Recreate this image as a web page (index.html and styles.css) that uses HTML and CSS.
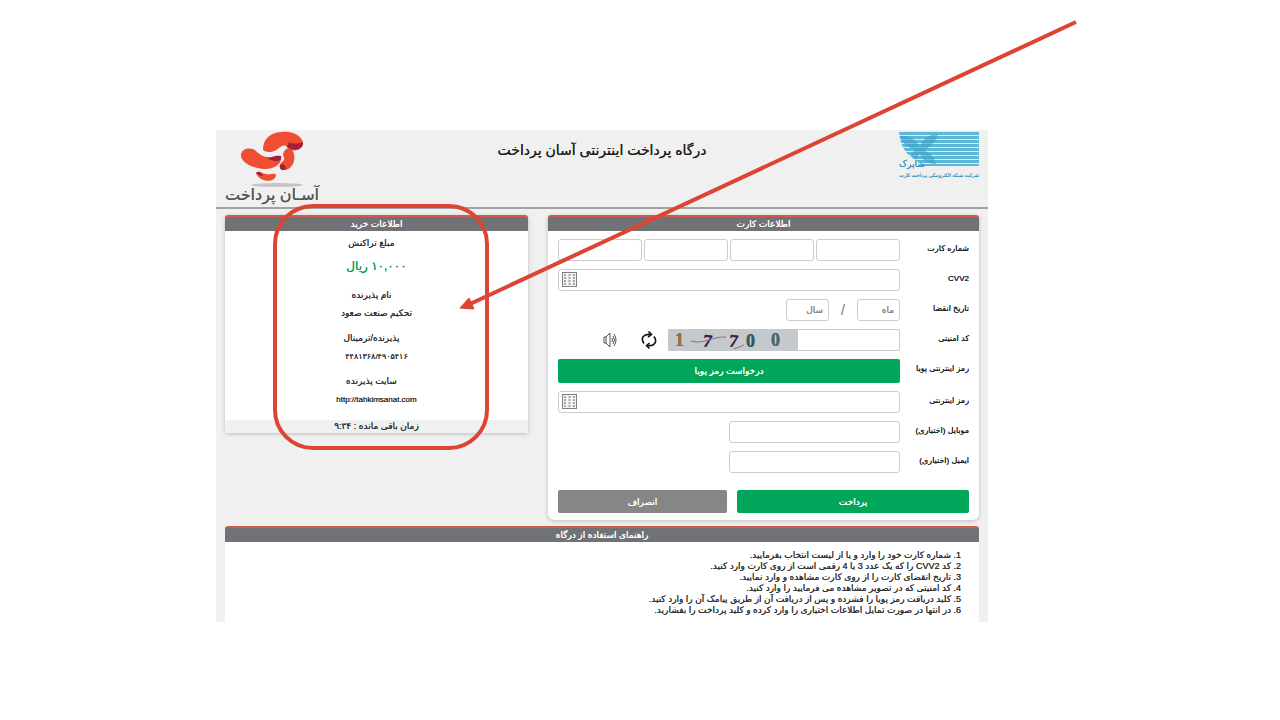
FILE: index.html
```html
<!DOCTYPE html>
<html lang="fa" dir="rtl">
<head>
<meta charset="utf-8">
<title>درگاه پرداخت اینترنتی آسان پرداخت</title>
<link rel="stylesheet" href="styles.css">
</head>
<body>
<div class="slide">
<div class="gateway">
  <header class="top">
    <div class="shaparak">
      <svg class="shaparak-mark" viewBox="0 0 80 36" aria-hidden="true">
        <defs>
          <pattern id="stripes" width="80" height="4" patternUnits="userSpaceOnUse"><rect y="1" width="80" height="3" fill="#5cb8d6"/></pattern>
          <clipPath id="mark"><path d="M0 0H80V35H22C19 29 14 27 11 25C4 19 1 12 0 0Z"/></clipPath>
        </defs>
        <g clip-path="url(#mark)">
          <rect width="80" height="36" fill="#d9f0f7"/>
          <rect width="80" height="36" fill="url(#stripes)"/>
          <path d="M1 5C11 4 18 9 21 17C23 8 30 3 39 3C37 11 31 17 24 19C31 21 36 27 37 33C27 33 22 28 21 21C19 27 17 30 13 32C9 26 13 20 18 18C9 18 3 12 1 5Z" fill="#3a9fc8" opacity=".6"/>
        </g>
      </svg>
      <span class="shaparak-name">شاپرک</span>
      <span class="shaparak-sub">شرکت شبکه الکترونیکی پرداخت کارت</span>
    </div>
    <h1>درگاه پرداخت اینترنتی آسان پرداخت</h1>
    <div class="asan">
      <svg class="asan-mark" viewBox="0 0 94 58" aria-hidden="true">
        <ellipse cx="52" cy="55" rx="26" ry="2" fill="#c4c4c4"/>
        <path d="M38 19C38 9 46 2 57 2C68 1 77 6 78 13C78 21 66 23 62 17C57 12 53 22 45 22C41 22 38 21 38 19Z" fill="#f04e32"/>
        <path d="M64 12C69 15 74 13 78 12C79 20 68 22 62 17Z" fill="#a71e3a"/>
        <path d="M16 24C18 18 26 17 31 21C39 29 47 28 56 26C58 34 48 40 38 39C27 38 15 32 16 24Z" fill="#f04e32"/>
        <path d="M42 28C47 28 49 25 56 26C57 32 51 33 42 28Z" fill="#a71e3a"/>
        <path d="M58 24C61 16 67 17 69 24C71 32 66 40 59 40C52 38 55 33 58 31C61 29 58 27 58 24Z" fill="#f04e32"/>
        <path d="M55 35C60 33 60 36 61 39C57 42 54 39 55 35Z" fill="#a71e3a"/>
        <path d="M31 43C34 40 36 43 41 44C46 45 50 42 51 45C50 54 34 52 31 43Z" fill="#f04e32"/>
        <path d="M31 43C34 40 37 43 38 46C35 46 33 45 31 43Z" fill="#a71e3a"/>
      </svg>
      <span class="asan-name">آسـان پرداخت</span>
    </div>
  </header>

  <main class="main">
    <section class="panel card">
      <h2>اطلاعات کارت</h2>
      <form class="form">
        <div class="row">
          <label for="c1">شماره کارت</label>
          <div class="quad">
            <input id="c1" type="text"><input type="text" aria-label="بخش دوم"><input type="text" aria-label="بخش سوم"><input type="text" aria-label="بخش چهارم">
          </div>
        </div>
        <div class="row">
          <label for="cvv">CVV2</label>
          <div class="pad">
            <input id="cvv" type="text">
            <svg class="keys" viewBox="0 0 15 15" aria-hidden="true"><rect x=".5" y=".5" width="14" height="14" fill="#f4f4f4" stroke="#808080"/><path d="M2 3H13M2 6H13M2 9H13M2 12H13" stroke="#8a8a8a" stroke-width="1.500" stroke-dasharray="2 2.500"/></svg>
          </div>
        </div>
        <div class="row">
          <label for="month">تاریخ انقضا</label>
          <div class="date">
            <input id="month" type="text" placeholder="ماه"><span>/</span><input type="text" placeholder="سال" aria-label="سال">
          </div>
        </div>
        <div class="row">
          <label for="code">کد امنیتی</label>
          <div class="security">
            <input id="code" type="text">
            <svg class="captcha" viewBox="0 0 130 22" role="img" aria-label="17700">
              <rect width="130" height="22" fill="#c3c9cc"/>
              <text x="7" y="17" fill="#9a7434">1</text>
              <text x="35" y="18" fill="#29264f" transform="rotate(8 40 12)">7</text>
              <text x="61" y="18" fill="#3e234b" transform="rotate(8 66 12)">7</text>
              <text x="78" y="18" fill="#365a63">0</text>
              <text x="103" y="17" fill="#456c6a">0</text>
              <path d="M23 12C35 16 45 7 58 8M66 20L76 16" fill="none" stroke="#a0608e"/>
            </svg>
            <button class="icon" type="button" aria-label="تصویر جدید">
              <svg viewBox="0 0 18 18" aria-hidden="true"><path d="M4 12.500C0 7 4 2.500 10.500 3.500M14 5.500C18 11 14 15.500 7.500 14.500" fill="none" stroke="#111" stroke-width="1.600"/><path d="M8.500 .5L11.500 3.500L8 6M9.500 12L6.500 14.500L9.500 17.500" fill="none" stroke="#111" stroke-width="1.600"/></svg>
            </button>
            <button class="icon" type="button" aria-label="پخش صدا">
              <svg viewBox="0 0 18 18" aria-hidden="true" fill="none" stroke="#555"><path d="M3 6H5L9 2V16L5 12H3ZM5 6V12M11 7Q12 9 11 11M12 5Q15 9 12 13M13 3Q17 9 13 15"/></svg>
            </button>
          </div>
        </div>
        <div class="row">
          <span class="caption">رمز اینترنتی پویا</span>
          <button class="btn green otp" type="button">درخواست رمز پویا</button>
        </div>
        <div class="row">
          <label for="pin">رمز اینترنتی</label>
          <div class="pad">
            <input id="pin" type="text">
            <svg class="keys" viewBox="0 0 15 15" aria-hidden="true"><rect x=".5" y=".5" width="14" height="14" fill="#f4f4f4" stroke="#808080"/><path d="M2 3H13M2 6H13M2 9H13M2 12H13" stroke="#8a8a8a" stroke-width="1.500" stroke-dasharray="2 2.500"/></svg>
          </div>
        </div>
        <div class="row">
          <label for="mobile">موبایل (اختیاری)</label>
          <div><input class="half" id="mobile" type="text"></div>
        </div>
        <div class="row">
          <label for="email">ایمیل (اختیاری)</label>
          <div><input class="half" id="email" type="text"></div>
        </div>
        <div class="actions">
          <button class="btn green" type="button">پرداخت</button>
          <button class="btn grey" type="button">انصراف</button>
        </div>
      </form>
    </section>

    <section class="panel purchase">
      <h2>اطلاعات خرید</h2>
      <dl>
        <div><dt>مبلغ تراکنش</dt><dd class="amount">۱۰,۰۰۰ ریال</dd></div>
        <div><dt>نام پذیرنده</dt><dd class="name">تحکیم صنعت صعود</dd></div>
        <div><dt>پذیرنده/ترمینال</dt><dd>۴۴۸۱۳۶۸/۴۹۰۵۴۱۶</dd></div>
        <div><dt>سایت پذیرنده</dt><dd>http://tahkimsanat.com</dd></div>
      </dl>
      <p class="timer">زمان باقی مانده : ۹:۳۴</p>
    </section>
  </main>

  <section class="panel help">
    <h2>راهنمای استفاده از درگاه</h2>
    <ol>
      <li>شماره کارت خود را وارد و یا از لیست انتخاب بفرمایید.</li>
      <li>کد CVV2 را که یک عدد 3 یا 4 رقمی است از روی کارت وارد کنید.</li>
      <li>تاریخ انقضای کارت را از روی کارت مشاهده و وارد نمایید.</li>
      <li>کد امنیتی که در تصویر مشاهده می فرمایید را وارد کنید.</li>
      <li>کلید دریافت رمز پویا را فشرده و پس از دریافت آن از طریق پیامک آن را وارد کنید.</li>
      <li>در انتها در صورت تمایل اطلاعات اختیاری را وارد کرده و کلید پرداخت را بفشارید.</li>
    </ol>
  </section>

  <svg class="callout" viewBox="0 0 870 460" aria-hidden="true">
    <rect x="59" y="76" width="212" height="242" rx="38" fill="none" stroke="#dc4434" stroke-width="4"/>
    <path d="M860 -108L254 174" stroke="#dc4434" stroke-width="4"/>
    <path d="M244 178L253 168L258 179Z" fill="#dc4434" stroke="#dc4434"/>
  </svg>
</div>
</div>
</body>
</html>
```
FILE: styles.css
```css
* { box-sizing: border-box; }
body {
  margin: 0;
  background: #fff;
  color: #333;
  font: 8px/12px "Liberation Sans", "DejaVu Sans", sans-serif;
  text-shadow: 0 0 0 currentColor;
}
h1, h2, p, dl, dd, ol { margin: 0; }
input, button { font: inherit; text-shadow: inherit; }

.slide { padding: 130px 292px 98px 216px; direction: ltr; }
.gateway { position: relative; direction: rtl; background: #f0f0f0; }

.top {
  display: grid;
  grid-template-columns: 94px 1fr 94px;
  padding: 0 9px;
  height: 79px;
  border-bottom: 2px solid #a2a2a2;
}
.top h1 { padding-top: 10px; font-size: 14px; line-height: 20px; font-weight: 400; color: #222; text-align: center; }
.shaparak { display: flex; flex-direction: column; width: 80px; padding-top: 1px; color: #3893ba; white-space: nowrap; }
.shaparak-mark { width: 80px; height: 36px; }
.shaparak-name { margin-top: -9px; font-size: 9px; line-height: 12px; align-self: flex-end; }
.shaparak-sub { font-size: 5px; line-height: 10px; }
.asan { display: flex; flex-direction: column; align-items: center; width: 94px; }
.asan-mark { width: 94px; height: 58px; }
.asan-name { font-size: 16px; line-height: 14px; color: #555; white-space: nowrap; }

.main {
  display: grid;
  grid-template-columns: 431fr 303fr;
  gap: 20px;
  align-items: start;
  padding: 6px 9px;
}
.panel { background: #fff; border-radius: 3px; box-shadow: 0 1px 4px #bbb; }
.panel h2 {
  height: 16px;
  border-top: 2px solid #cf5b48;
  border-radius: 3px 3px 0 0;
  background: #717275;
  color: #fff;
  font-size: 9px;
  line-height: 14px;
  font-weight: 400;
  text-align: center;
}
.card { border-radius: 3px 3px 6px 6px; }

.form { display: flex; flex-direction: column; gap: 8px; padding: 8px 10px 7px; }
.row { display: grid; grid-template-columns: 69px 1fr; }
.row label, .caption { line-height: 20px; color: #222; white-space: nowrap; }
.row input {
  display: block;
  width: 100%;
  min-width: 0;
  height: 22px;
  padding: 0 5px;
  border: 1px solid #ccc;
  border-radius: 3px;
  background: #fff;
}
.row input::placeholder { color: #888; }
.quad { display: grid; grid-template-columns: repeat(4, 1fr); gap: 2px; }
.pad { position: relative; }
.keys { position: absolute; left: 4px; top: 3px; width: 15px; height: 15px; }
.date { display: flex; align-items: center; }
.row .date input { width: 43px; font-size: 9px; }
.date span { width: 28px; text-align: center; font-size: 14px; color: #999; }
.security { display: flex; align-items: center; }
.row .security input { width: 102px; border-left: 0; border-radius: 0 3px 3px 0; }
.captcha { width: 130px; height: 22px; font: bold 18px/18px "Liberation Serif", serif; direction: ltr; overflow: visible; }
.icon { display: flex; width: 18px; height: 18px; margin-right: 10px; padding: 0; border: 0; background: none; }
.icon + .icon { margin-right: 21px; }
.icon svg { width: 18px; height: 18px; }
.row .half { width: 50%; }
.btn { height: 23px; padding: 0; border: 0; border-radius: 2px; color: #fff; font-size: 9px; }
.otp { height: 24px; }
.green { background: #00a65a; }
.grey { background: #868686; }
.actions { display: grid; grid-template-columns: 232fr 169fr; gap: 10px; padding-top: 9px; }

.purchase dl { display: flex; flex-direction: column; gap: 6px; padding: 3px 0 11px; text-align: center; }
.purchase dt { padding-right: 10px; line-height: 18px; font-size: 9px; }
.purchase dd { line-height: 19px; }
.purchase .name { font-size: 9px; }
.purchase .amount { font-size: 12px; line-height: 28px; color: #0c9c5a; }
.timer { height: 13px; line-height: 13px; background: #f0f0f0; text-align: center; font-size: 9px; }

.help { margin: 0 9px; border-radius: 3px 3px 0 0; box-shadow: none; }
.help ol { padding: 8px 28px 6px; font-size: 9px; line-height: 11px; }

.callout { position: absolute; left: 0; top: 0; width: 870px; height: 460px; overflow: visible; }
```
